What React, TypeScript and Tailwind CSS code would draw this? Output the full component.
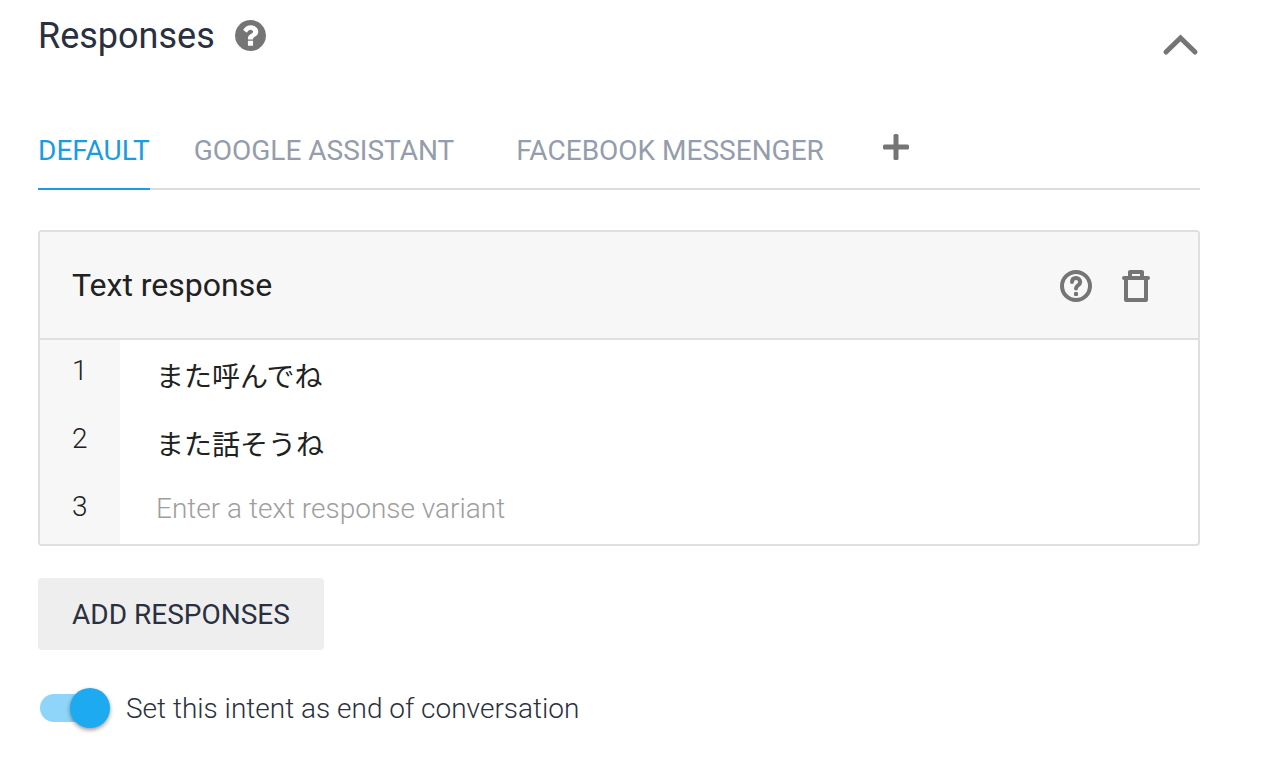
import React, { useState } from 'react';

const tabs = ['DEFAULT', 'GOOGLE ASSISTANT', 'FACEBOOK MESSENGER'];

function HelpSolidIcon() {
  return (
    <svg className="size-[31px]" viewBox="128 128 1536 1536" fill="currentColor" aria-hidden="true">
      <path d="M1024 1376v-192q0-14-9-23t-23-9h-192q-14 0-23 9t-9 23v192q0 14 9 23t23 9h192q14 0 23-9t9-23zm256-672q0-88-55.5-163t-138.5-116-170-41q-243 0-371 213-15 24 8 42l132 100q7 6 19 6 16 0 25-12 53-68 86-92 34-24 86-24 48 0 85.5 26t37.5 59q0 38-20 61t-68 45q-63 28-115.5 86.5t-52.5 125.5v36q0 14 9 23t23 9h192q14 0 23-9t9-23q0-19 21.5-49.5t54.5-49.5q32-18 49-28.5t46-35 44.5-48 28-60.5 12.5-81zm384 192q0 209-103 385.5t-279.5 279.5-385.5 103-385.5-103-279.5-279.5-103-385.5 103-385.5 279.5-279.5 385.5-103 385.5 103 279.5 279.5 103 385.5z" />
    </svg>
  );
}

function HelpOutlineIcon() {
  return (
    <svg className="size-8" viewBox="0 0 32 32" fill="none" stroke="currentColor" aria-hidden="true">
      <circle cx="16" cy="16" r="14" strokeWidth="4" />
      <path d="M12 12C12 9.400 13.600 8 16 8s4.200 1.600 4.200 4c0 3.200-4.200 3.400-4.200 6.500" strokeWidth="4" strokeLinecap="round" />
      <rect x="14" y="22" width="4" height="4" rx="1" fill="currentColor" stroke="none" />
    </svg>
  );
}

function TrashIcon() {
  return (
    <svg className="h-8 w-7" viewBox="0 0 28 32" fill="none" stroke="currentColor" strokeLinejoin="round" aria-hidden="true">
      <rect x="4" y="8" width="20" height="22" strokeWidth="4" />
      <path d="M2 8h24" strokeWidth="4" strokeLinecap="round" />
      <path d="M8 7V2h12v5" strokeWidth="4" />
    </svg>
  );
}

export default function App() {
  const [activeTab, setActiveTab] = useState(tabs[0]);
  const [variants, setVariants] = useState(['また呼んでね', 'また話そうね', '']);
  const [isEnd, setIsEnd] = useState(true);

  const updateVariant = (index: number, value: string) => {
    setVariants(variants.map((v, i) => (i === index ? value : v)));
  };

  return (
    <main className="bg-white pb-14 pl-[38px] pr-[78px] pt-3 font-['Roboto','Noto_Sans_CJK_JP',sans-serif] text-[28px] text-[#2b303e]">
      {/* Section header */}
      <header className="flex items-start justify-between">
        <div className="flex items-center gap-5">
          <h2 className="text-[36px] leading-12">Responses</h2>
          <button type="button" aria-label="About responses" className="mb-0.5 text-[#757575]">
            <HelpSolidIcon />
          </button>
        </div>
        <button type="button" aria-label="Collapse section" className="mt-5 text-[#757575]">
          <svg className="h-6 w-10" viewBox="0 0 40 24" fill="none" stroke="currentColor" strokeWidth="5" strokeLinecap="round" aria-hidden="true">
            <path d="M6 20L20.500 6L35 20" />
          </svg>
        </button>
      </header>

      {/* Platform tabs */}
      <div className="mt-12 flex h-[82px] items-stretch border-b-2 border-[#dcdcdc]">
        <div role="tablist" className="-mb-0.5 flex">
          {tabs.map((tab, i) => (
            <button
              key={tab}
              type="button"
              role="tab"
              aria-selected={tab === activeTab}
              onClick={() => setActiveTab(tab)}
              className={`border-b-2 pt-1.5 ${i === 1 ? 'ml-11' : i === 2 ? 'ml-[62px]' : ''} ${
                tab === activeTab ? 'border-[#1b9be0] text-[#1b9be0]' : 'border-transparent text-[#959cab]'
              }`}
            >
              {tab}
            </button>
          ))}
        </div>
        <button type="button" aria-label="Add platform" className="mb-0.5 ml-[59px] text-[#757575]">
          <svg className="size-[26px]" viewBox="0 0 26 26" fill="currentColor" aria-hidden="true">
            <rect x="0" y="10.500" width="26" height="5" rx="1.500" />
            <rect x="10.500" y="0" width="5" height="26" rx="1.500" />
          </svg>
        </button>
      </div>

      {/* Response card */}
      <section className="mt-10 overflow-hidden rounded border-2 border-[#dfdfdf]">
        <div className="flex h-27 items-center justify-between border-b-2 border-[#dfdfdf] bg-[#f7f7f7] pl-8 pr-12 text-[#212121]">
          <h3 className="text-[32px]">Text response</h3>
          <div className="flex gap-[30px] pt-0.5 text-[#757575]">
            <button type="button" aria-label="About text responses">
              <HelpOutlineIcon />
            </button>
            <button type="button" aria-label="Delete text response">
              <TrashIcon />
            </button>
          </div>
        </div>
        <ol className="font-light text-[#212121]">
          {variants.map((variant, i) => (
            <li key={i} className="flex h-17">
              <label htmlFor={`variant-${i}`} className="w-20 bg-[#f7f7f7] pl-8 leading-[62px]">
                {i + 1}
              </label>
              <input
                id={`variant-${i}`}
                type="text"
                value={variant}
                placeholder="Enter a text response variant"
                onChange={(e) => updateVariant(i, e.target.value)}
                className="min-w-0 flex-1 pl-9 pt-2 font-normal outline-none placeholder:text-[#9e9e9e] placeholder-shown:pb-0.5 placeholder-shown:pt-0 placeholder-shown:font-light"
              />
            </li>
          ))}
        </ol>
      </section>

      <button type="button" className="mt-8 h-18 rounded bg-[#eeeeee] px-[34px] pt-0.5">
        ADD RESPONSES
      </button>

      {/* End of conversation switch */}
      <label className="mt-9 flex w-fit items-center gap-4 pl-0.5 font-light">
        <span className="relative flex h-7 w-[70px] items-center">
          <input
            type="checkbox"
            role="switch"
            checked={isEnd}
            onChange={(e) => setIsEnd(e.target.checked)}
            className="peer h-7 w-16 appearance-none rounded-full bg-gray-300 checked:bg-[#8fd5f9]"
          />
          <span className="pointer-events-none absolute left-0 size-10 rounded-full bg-gray-50 shadow-[0_2px_4px_rgba(0,0,0,0.4)] peer-checked:left-[30px] peer-checked:bg-[#1eaaf1]" />
        </span>
        <span className="pt-0.5 leading-[42px]">Set this intent as end of conversation</span>
      </label>
    </main>
  );
}
